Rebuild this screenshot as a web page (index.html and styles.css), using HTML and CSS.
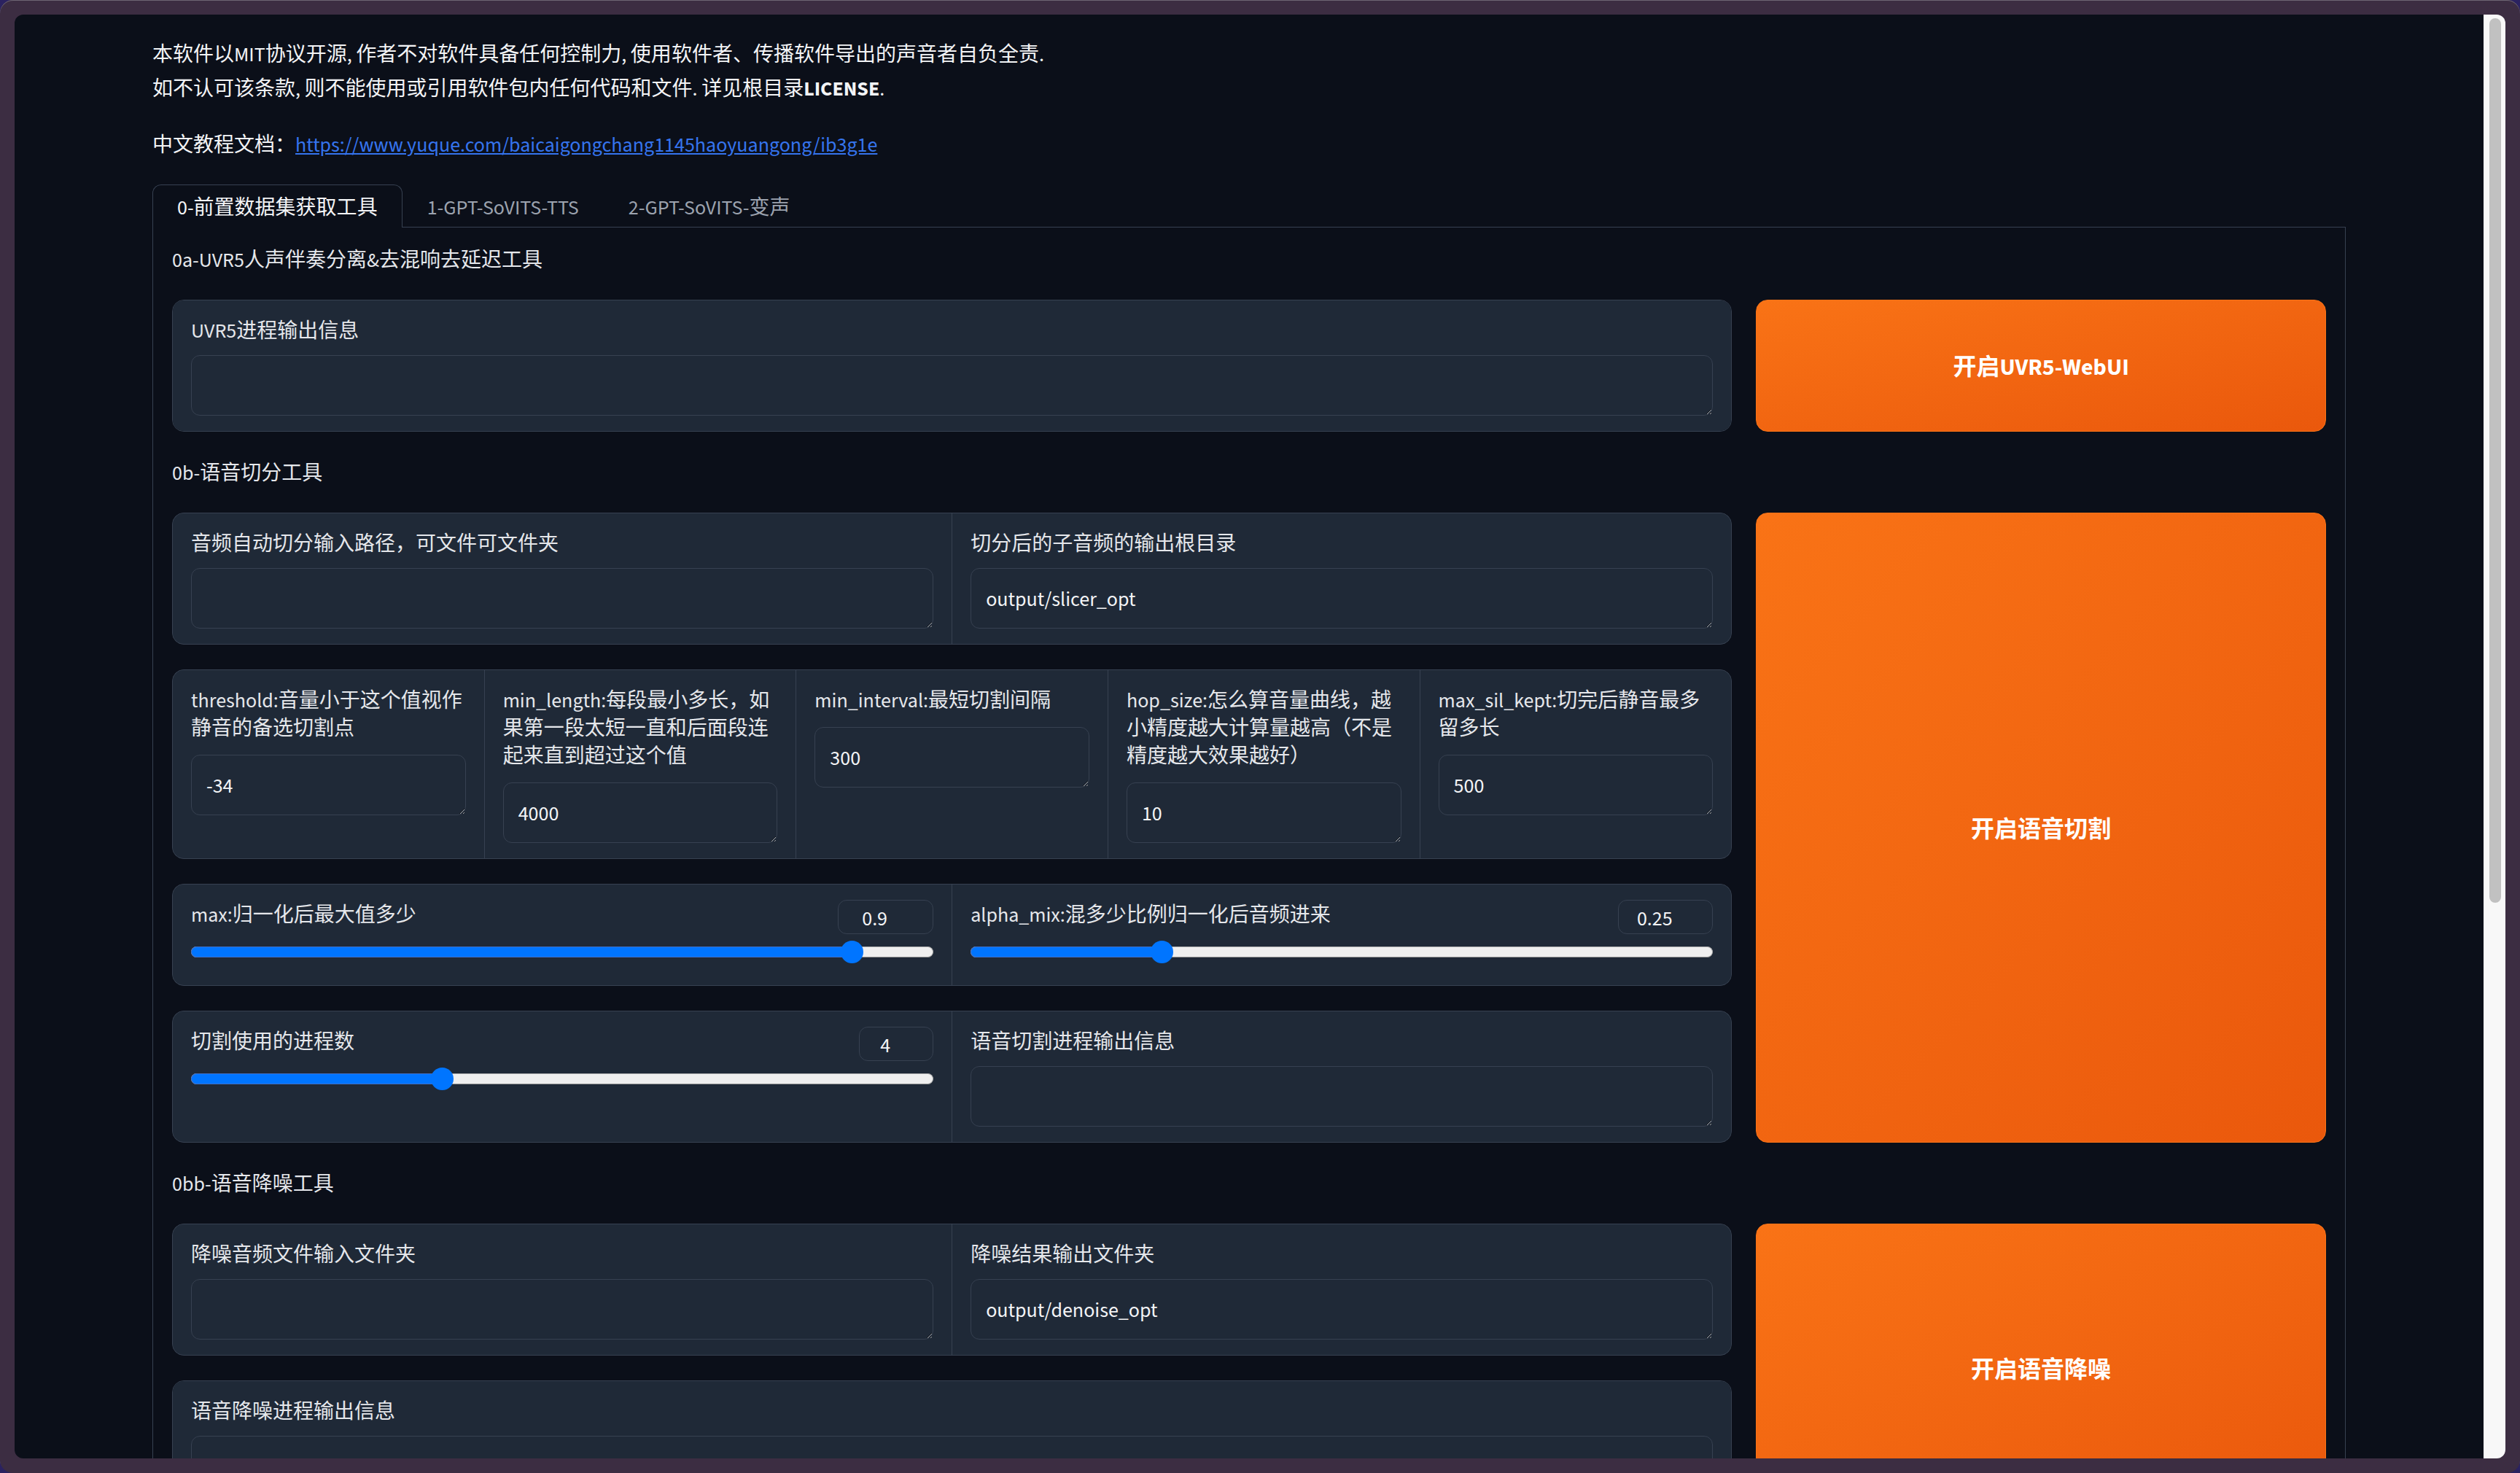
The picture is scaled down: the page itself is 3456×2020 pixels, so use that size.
FILE: index.html
```html
<!DOCTYPE html>
<html lang="zh">
<head>
<meta charset="utf-8">
<title>GPT-SoVITS WebUI</title>
<link rel="stylesheet" href="styles.css">
</head>
<body>
<div class="window">
  <div class="viewport">
    <div class="page">
      <div class="container">
        <div class="md">
          <p>本软件以MIT协议开源, 作者不对软件具备任何控制力, 使用软件者、传播软件导出的声音者自负全责.<br>如不认可该条款, 则不能使用或引用软件包内任何代码和文件. 详见根目录<b>LICENSE</b>.</p>
          <p>中文教程文档：<a href="#">https://www.yuque.com/baicaigongchang1145haoyuangong/ib3g1e</a></p>
        </div>
        <div class="tabs">
          <div class="tabnav">
            <button class="tab selected">0-前置数据集获取工具</button>
            <button class="tab">1-GPT-SoVITS-TTS</button>
            <button class="tab">2-GPT-SoVITS-变声</button>
          </div>
          <div class="panel">
            <div class="section-title">0a-UVR5人声伴奏分离&amp;去混响去延迟工具</div>
            <div class="row">
              <div class="col">
                <div class="block">
                  <div class="cell">
                    <label class="lbl">UVR5进程输出信息</label>
                    <textarea class="ta" rows="1"></textarea>
                  </div>
                </div>
              </div>
              <button class="btn">开启UVR5-WebUI</button>
            </div>

            <div class="section-title">0b-语音切分工具</div>
            <div class="row">
              <div class="col">
                <div class="block g2">
                  <div class="cell">
                    <label class="lbl">音频自动切分输入路径，可文件可文件夹</label>
                    <textarea class="ta" rows="1"></textarea>
                  </div>
                  <div class="cell">
                    <label class="lbl">切分后的子音频的输出根目录</label>
                    <textarea class="ta" rows="1">output/slicer_opt</textarea>
                  </div>
                </div>
                <div class="block g5">
                  <div class="cell">
                    <label class="lbl">threshold:音量小于这个值视作静音的备选切割点</label>
                    <textarea class="ta" rows="1">-34</textarea>
                  </div>
                  <div class="cell">
                    <label class="lbl">min_length:每段最小多长，如果第一段太短一直和后面段连起来直到超过这个值</label>
                    <textarea class="ta" rows="1">4000</textarea>
                  </div>
                  <div class="cell">
                    <label class="lbl">min_interval:最短切割间隔</label>
                    <textarea class="ta" rows="1">300</textarea>
                  </div>
                  <div class="cell">
                    <label class="lbl">hop_size:怎么算音量曲线，越小精度越大计算量越高（不是精度越大效果越好）</label>
                    <textarea class="ta" rows="1">10</textarea>
                  </div>
                  <div class="cell">
                    <label class="lbl">max_sil_kept:切完后静音最多留多长</label>
                    <textarea class="ta" rows="1">500</textarea>
                  </div>
                </div>
                <div class="block g2">
                  <div class="cell">
                    <div class="sl-head">
                      <span class="lbl">max:归一化后最大值多少</span>
                      <input class="num" type="text" value="0.9">
                    </div>
                    <div class="slider"><div class="track" style="--v:0.904"><div class="fill"></div><div class="knob"></div></div></div>
                  </div>
                  <div class="cell">
                    <div class="sl-head">
                      <span class="lbl">alpha_mix:混多少比例归一化后音频进来</span>
                      <input class="num n025" type="text" value="0.25">
                    </div>
                    <div class="slider"><div class="track" style="--v:0.25"><div class="fill"></div><div class="knob"></div></div></div>
                  </div>
                </div>
                <div class="block g2">
                  <div class="cell">
                    <div class="sl-head">
                      <span class="lbl">切割使用的进程数</span>
                      <input class="num n4" type="text" value="4">
                    </div>
                    <div class="slider"><div class="track" style="--v:0.3333"><div class="fill"></div><div class="knob"></div></div></div>
                  </div>
                  <div class="cell">
                    <label class="lbl">语音切割进程输出信息</label>
                    <textarea class="ta" rows="1"></textarea>
                  </div>
                </div>
              </div>
              <button class="btn">开启语音切割</button>
            </div>

            <div class="section-title">0bb-语音降噪工具</div>
            <div class="row">
              <div class="col">
                <div class="block g2">
                  <div class="cell">
                    <label class="lbl">降噪音频文件输入文件夹</label>
                    <textarea class="ta" rows="1"></textarea>
                  </div>
                  <div class="cell">
                    <label class="lbl">降噪结果输出文件夹</label>
                    <textarea class="ta" rows="1">output/denoise_opt</textarea>
                  </div>
                </div>
                <div class="block">
                  <div class="cell">
                    <label class="lbl">语音降噪进程输出信息</label>
                    <textarea class="ta" rows="1"></textarea>
                  </div>
                </div>
              </div>
              <button class="btn">开启语音降噪</button>
            </div>
          </div>
        </div>
      </div>
    </div>
    <div class="scrollbar"><div class="scroll-thumb"></div></div>
  </div>
</div>
</body>
</html>
```

FILE: styles.css
```css
* { box-sizing: border-box; }

html {
  background: #2b2260;
  color-scheme: dark;
}

body {
  margin: 0;
  height: 2020px;
  overflow: hidden;
  font-family: "Source Sans 3", "Noto Sans CJK SC", sans-serif;
}

.window {
  height: 2020px;
  padding: 20px;
  background: #3c2d42;
  border-radius: 18px;
  box-shadow: inset 0 1px 0 #6d6573;
}

.viewport {
  display: flex;
  height: 100%;
  border-radius: 12px;
  overflow: hidden;
}

.page {
  flex: 1;
  min-width: 0;
  background: #0b0f19;
  overflow: hidden;
}

.scrollbar {
  flex: 0 0 30px;
  padding: 5px 6px 0 8px;
  background: #f8f8f8;
}

.scroll-thumb {
  height: 1213px;
  border-radius: 8px;
  background: #c1c1c1;
}

.container {
  width: 3008px;
  margin: 0 auto;
  padding-top: 32px;
}

.md p {
  margin: 0 0 30px;
  font-size: 28px;
  line-height: 47px;
  color: #f3f4f6;
}

.md p:last-child { margin-bottom: 0; }

.md a {
  color: #3574ee;
  text-decoration: underline;
}

.md b { font-weight: 700; }

.tabs { margin-top: 30px; }

.tabnav {
  display: flex;
  border-bottom: 1px solid #374151;
}

.tab {
  height: 58px;
  padding: 4px 33px 0;
  border: 1px solid transparent;
  border-bottom: 0;
  background: none;
  font: inherit;
  font-size: 28px;
  line-height: 1;
  color: #9ca3af;
}

.tab.selected {
  height: 59px;
  margin-bottom: -1px;
  border-color: #374151;
  border-radius: 12px 12px 0 0;
  background: #0b0f19;
  color: #f3f4f6;
}

.panel {
  display: flex;
  flex-direction: column;
  gap: 33px;
  padding: 21px 26px 26px;
  border: 1px solid #374151;
  border-top: 0;
}

.section-title {
  height: 45px;
  padding-top: 4px;
  font-size: 28px;
  line-height: 41px;
  color: #e5e7eb;
}

.row {
  display: grid;
  grid-template-columns: minmax(0, 2140fr) minmax(0, 782fr);
  gap: 33px;
}

.col {
  display: flex;
  flex-direction: column;
  gap: 34px;
}

.block {
  display: grid;
  gap: 1px;
  background: #374151;
  border: 1px solid #374151;
  border-radius: 16px;
  overflow: hidden;
}

.g2 { grid-template-columns: repeat(2, minmax(0, 1fr)); }
.g5 { grid-template-columns: repeat(5, minmax(0, 1fr)); }

.cell {
  min-width: 0;
  padding: 21px 25px;
  background: #1f2937;
}

.lbl {
  display: block;
  margin-bottom: 14px;
  padding-top: 2px;
  font-size: 28px;
  line-height: 38px;
  color: #e5e7eb;
}

.g5 .lbl { margin-bottom: 17px; }

.ta {
  display: block;
  width: 100%;
  height: 83px;
  padding: 22px 20px 18px;
  border: 1px solid #374151;
  border-radius: 12px;
  background: #1f2937;
  color: #f3f4f6;
  font: inherit;
  font-size: 28px;
  line-height: 41px;
  resize: vertical;
  outline: none;
}

.sl-head {
  display: flex;
  justify-content: space-between;
  align-items: flex-start;
}

.sl-head .lbl { margin-bottom: 0; }

.num {
  width: 131px;
  height: 47px;
  padding: 4px 30px 0 0;
  border: 1px solid #374151;
  border-radius: 12px;
  background: #1f2937;
  color: #f3f4f6;
  font: inherit;
  font-size: 28px;
  text-align: center;
  outline: none;
}

.num.n4 { width: 102px; }
.num.n025 { width: 130px; }

.slider {
  display: flex;
  align-items: center;
  height: 49px;
}

.track {
  position: relative;
  flex: 1;
  height: 15px;
  border: 1px solid #b0b0b0;
  border-bottom-color: #959595;
  border-radius: 8px;
  background: #efefef;
}

.fill {
  position: absolute;
  left: -1px;
  top: -1px;
  bottom: -1px;
  width: calc(16px + var(--v) * (100% - 30px));
  border: 1px solid #3f6fc5;
  border-right: 0;
  border-radius: 8px 0 0 8px;
  background: #0075ff;
}

.knob {
  position: absolute;
  top: 50%;
  left: calc(var(--v) * (100% - 30px) - 1px);
  width: 31px;
  height: 31px;
  margin-top: -15.5px;
  border-radius: 50%;
  background: #0075ff;
}

.btn {
  padding-top: 2px;
  border: 1px solid #f97316;
  border-radius: 16px;
  background: linear-gradient(to bottom right, #f97316, #ea580c);
  color: #ffffff;
  font: inherit;
  font-size: 32px;
  font-weight: 700;
}
```
